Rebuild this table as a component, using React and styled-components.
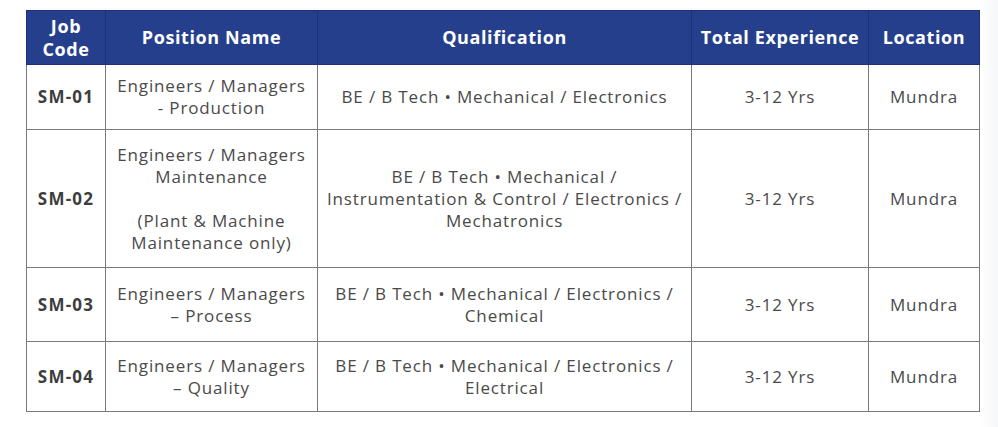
import React from "react";
import styled, { createGlobalStyle } from "styled-components";

const GlobalStyle = createGlobalStyle`
  body {
    margin: 0;
    background: #ffffff;
    font-family: "Open Sans", "Liberation Sans", sans-serif;
  }
`;

const rows = [
  {
    code: "SM-01",
    position: ["Engineers / Managers", "-  Production"],
    qualification: ["BE / B Tech • Mechanical / Electronics"],
    height: 65,
  },
  {
    code: "SM-02",
    position: [
      "Engineers / Managers",
      "Maintenance",
      "",
      "(Plant & Machine",
      "Maintenance only)",
    ],
    qualification: [
      "BE / B Tech • Mechanical /",
      "Instrumentation & Control / Electronics /",
      "Mechatronics",
    ],
    height: 138,
  },
  {
    code: "SM-03",
    position: ["Engineers / Managers", "–  Process"],
    qualification: ["BE / B Tech • Mechanical / Electronics /", "Chemical"],
    height: 74,
  },
  {
    code: "SM-04",
    position: ["Engineers / Managers", "– Quality"],
    qualification: ["BE / B Tech • Mechanical / Electronics /", "Electrical"],
    height: 70,
  },
];

const Lines = ({ lines }) =>
  lines.map((line, i) => (
    <React.Fragment key={i}>
      {line === "" ? "\u00a0" : line}
      {i < lines.length - 1 && <br />}
    </React.Fragment>
  ));

const App = () => {
  return (
    <Page>
      <GlobalStyle />
      <Table>
        <colgroup>
          <col style={{ width: 79 }} />
          <col style={{ width: 212 }} />
          <col style={{ width: 374 }} />
          <col style={{ width: 177 }} />
          <col style={{ width: 111 }} />
        </colgroup>
        <thead>
          <tr>
            <HeadCell>
              Job
              <br />
              Code
            </HeadCell>
            <HeadCell>Position Name</HeadCell>
            <HeadCell>Qualification</HeadCell>
            <HeadCell>Total Experience</HeadCell>
            <HeadCell>Location</HeadCell>
          </tr>
        </thead>
        <tbody>
          {rows.map((row) => (
            <Row key={row.code} $height={row.height}>
              <CodeCell>{row.code}</CodeCell>
              <Cell>
                <Lines lines={row.position} />
              </Cell>
              <Cell>
                <Lines lines={row.qualification} />
              </Cell>
              <Cell>3-12 Yrs</Cell>
              <Cell>Mundra</Cell>
            </Row>
          ))}
        </tbody>
      </Table>
    </Page>
  );
};

const Page = styled.div`
  width: 998px;
  height: 427px;
  padding: 10px 0 0 26px;
  box-sizing: border-box;
  background: linear-gradient(to right, #ffffff 0, #ffffff 980px, #f6f7f9 998px);
`;

const Table = styled.table`
  width: 953px;
  border-collapse: collapse;
  table-layout: fixed;
`;

const HeadCell = styled.th`
  height: 53px;
  padding: 0;
  background: #253f8d;
  color: #ffffff;
  font-size: 18px;
  font-weight: 700;
  line-height: 23px;
  text-align: center;
  vertical-align: middle;
  border: 1px solid #1d3274;
  letter-spacing: 0.6px;
  white-space: nowrap;
`;

const Row = styled.tr`
  height: ${({ $height }) => $height}px;
`;

const Cell = styled.td`
  padding: 0;
  color: #4a4a4a;
  font-size: 17px;
  line-height: 22px;
  letter-spacing: 0.85px;
  text-align: center;
  vertical-align: middle;
  border: 1.5px solid #7a7a7a;
  white-space: nowrap;
`;

const CodeCell = styled(Cell)`
  font-weight: 700;
  color: #3d3d3d;
  letter-spacing: 1.2px;
`;

export default App;
